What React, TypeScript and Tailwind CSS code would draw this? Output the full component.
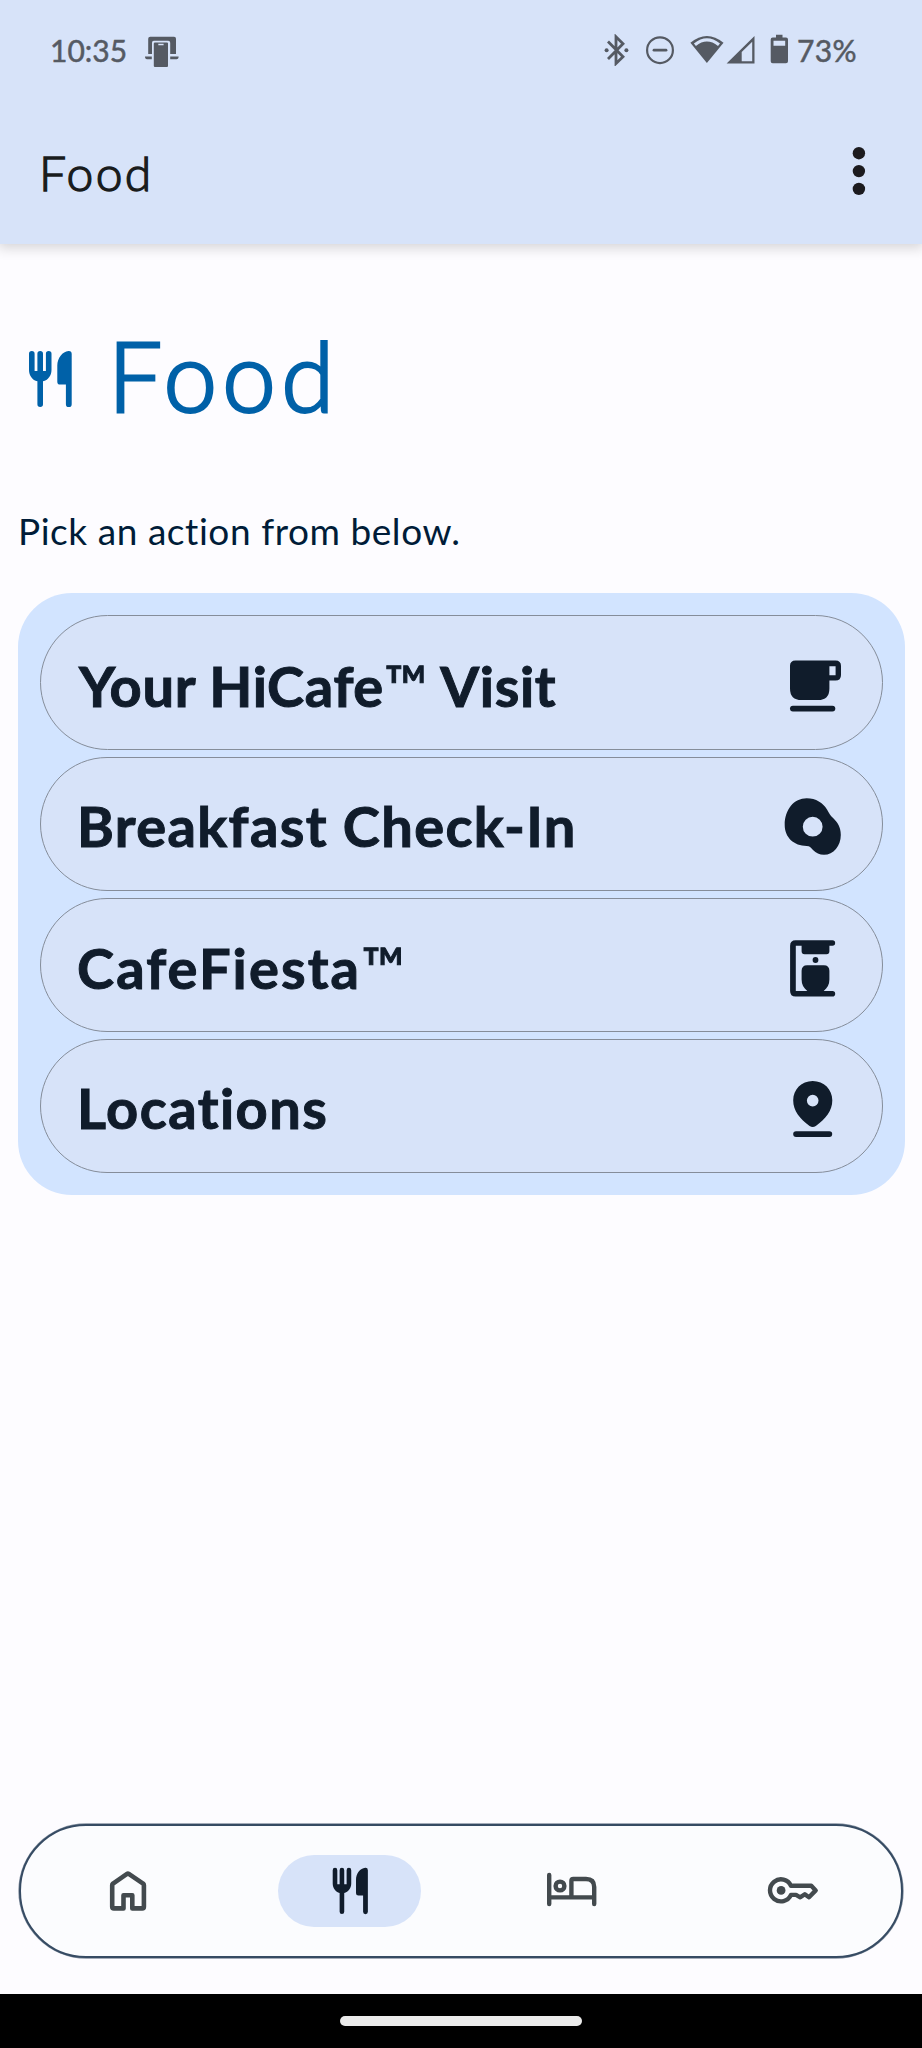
import type { ReactNode } from "react";

type IconProps = { box: string; className: string; children: ReactNode };

function Icon({ box, className, children }: IconProps) {
  return (
    <svg viewBox={box} className={`block shrink-0 ${className}`} fill="currentColor" aria-hidden="true">
      {children}
    </svg>
  );
}

function ForkKnife({ className }: { className: string }) {
  return (
    <Icon box="16 344.6 68 68" className={className}>
      <path d="M29 353.3a2.8 2.8 0 0 1 5.6 0V370.5H37.4V353.3a2.8 2.8 0 0 1 5.6 0V370.5H45.9V353.3a2.8 2.8 0 0 1 5.6 0V369.5C51.5 375 48 379.8 43 380.9V403.8a2.8 2.8 0 0 1 -5.6 0V380.9C32.5 379.8 29 375 29 369.5Z" />
      <path d="M57.3 365C57.3 357.5 62.5 351 68.5 350.5Q71.7 350.3 71.7 353.5V403.8a2.9 2.9 0 0 1 -5.8 0V384.2H60.2Q57.3 384.2 57.3 381.3Z" />
    </Icon>
  );
}

function StatusBar() {
  return (
    <div className="flex h-[101px] items-center pb-[2px] pl-[50px] pr-[65px] text-[#555a63]">
      <span className="text-[30px] leading-none [-webkit-text-stroke:0.5px_currentColor]">10:35</span>
      <Icon box="144 35.5 36 34" className="ml-[17px] mt-[4px] h-[34px] w-[36px]">
        <path d="M150.3 37.3H174Q176 37.3 176 39.3V54.5H170.2V43.3Q170.2 41.2 168.2 41.2H153.8Q152 41.2 152 43.3V54.5H148.2V39.3Q148.2 37.3 150.3 37.3Z" />
        <path fillRule="evenodd" d="M155 43H167Q168 43 168 44V66.4Q168 67.4 167 67.4H155Q153.8 67.4 153.8 66.4V44Q153.8 43 155 43ZM158.3 44.2V45.8H163.6V44.2Z" />
        <path d="M145 57H151.8V59.8H147Q145 59.8 145 57ZM170.2 57H178.6Q178.6 59.8 176.6 59.8H170.2Z" />
      </Icon>
      <div className="flex-1" />
      <Icon box="600 34.5 192 32" className="mr-[5px] h-[32px] w-[192px]">
        <path d="M608 42L623 57.2L616 64V37.3L623 44.2L608 59.4" fill="none" stroke="currentColor" strokeWidth="2.8" />
        <circle cx="606.6" cy="50.7" r="2" />
        <circle cx="626.4" cy="50.7" r="2" />
        <circle cx="660" cy="50.7" r="12.9" fill="none" stroke="currentColor" strokeWidth="2.2" />
        <path d="M654 50.7H666" stroke="currentColor" strokeWidth="2.8" strokeLinecap="round" />
        <path d="M690.4 43.3Q706.9 29.7 723.5 43.3L706.9 63.6Z" />
        <path d="M694.9 45.2Q706.9 35.6 719 45.2" fill="none" stroke="#d7e3f9" strokeWidth="3.2" />
        <path fillRule="evenodd" d="M726.6 64L754.5 36.4V64ZM741.7 61.8H752.2V42.2L741.7 52.6Z" />
        <path fillRule="evenodd" d="M776 35.3H782.5V38H786Q788 38 788 40V61.8Q788 63.8 786 63.8H772.7Q770.7 63.8 770.7 61.8V40Q770.7 38 772.7 38H776ZM773.5 41.2V46.2H785.2V41.2Z" />
      </Icon>
      <span className="text-[30px] leading-none tracking-[0.4px] [-webkit-text-stroke:0.5px_currentColor]">73%</span>
    </div>
  );
}

function CupIcon() {
  return (
    <Icon box="779 648.5 68 68" className="size-[68px]">
      <path fillRule="evenodd" d="M795.5 660H835.5Q841 660 841 665.5V674.5Q841 680 835.5 680H829.4V688Q829.4 699.6 818 699.6H801.5Q790 699.6 790 688V665.5Q790 660 795.5 660ZM829.4 665.8V674.8H835.6V665.8Z" />
      <rect x="790" y="705.2" width="45.3" height="5.8" rx="2.9" />
    </Icon>
  );
}

function EggIcon() {
  return (
    <Icon box="779 790 68 68" className="size-[68px]">
      <path
        fillRule="evenodd"
        d="M806.7 798.3C816 798.3 823 803 827 809.5C829.5 813.6 830 815.2 832.8 817.8C837.5 822.3 840.8 827 840.8 835C840.8 846 833.5 854.8 824 854.8C819.5 854.8 816 853 813 850C810.5 847.3 809.8 845.9 806.7 845.9C794 845.9 784.7 837.5 784.7 825C784.7 809.5 794 798.3 806.7 798.3ZM812.7 816.8A9.9 9.9 0 1 0 812.7 836.6A9.9 9.9 0 1 0 812.7 816.8Z"
      />
    </Icon>
  );
}

function CoffeeMakerIcon() {
  return (
    <Icon box="779 931 68 68" className="size-[68px]">
      <path d="M795.6 940.2H832.4a2.7 2.7 0 0 1 0 5.5H829.4V951.3Q829.4 954.2 826.5 954.2H804.6Q801.6 954.2 801.6 951.3V945.7H795.8V990.9H807.3C803.6 988 801.6 984.5 801.6 979.5V970.8Q801.6 965.2 807.2 965.2H823.8Q829.4 965.2 829.4 970.8V979.5C829.4 984.5 827.4 988 823.7 990.9H832.4a2.7 2.7 0 0 1 0 5.6H795.6Q790.1 996.5 790.1 991V945.7Q790.1 940.2 795.6 940.2Z" />
      <circle cx="815.5" cy="960" r="2.9" />
    </Icon>
  );
}

function PinIcon() {
  return (
    <Icon box="779 1072 68 68" className="size-[68px]">
      <path
        fillRule="evenodd"
        d="M812.7 1081C824 1081 832.3 1089.5 832.3 1100.3C832.3 1111 825.5 1119 815.8 1126Q812.7 1128 809.6 1126C800 1119 793.2 1111 793.2 1100.3C793.2 1089.5 801.5 1081 812.7 1081ZM812.7 1094.8A5.8 5.8 0 1 0 812.7 1106.4A5.8 5.8 0 1 0 812.7 1094.8Z"
      />
      <rect x="793.2" y="1131.2" width="39" height="5.7" rx="2.85" />
    </Icon>
  );
}

function Trademark() {
  return <span className="text-[58px] font-normal leading-none">™</span>;
}

const actions = [
  { id: "visit", label: <>Your HiCafe<Trademark /> Visit</>, tracking: "pl-[38px] tracking-[0.65px]", icon: <CupIcon /> },
  { id: "breakfast", label: <>Breakfast Check-In</>, tracking: "pl-[36px] tracking-[1.37px]", icon: <EggIcon /> },
  { id: "fiesta", label: <>CafeFiesta<Trademark /></>, tracking: "pl-[36px] tracking-[2.1px]", icon: <CoffeeMakerIcon /> },
  { id: "locations", label: <>Locations</>, tracking: "pl-[36px] tracking-[1.45px]", icon: <PinIcon /> },
];

function BottomNav() {
  return (
    <nav className="mb-[36px] ml-[19px] flex h-[134px] w-[884px] items-center justify-between rounded-full border-2 border-[#364b63] bg-[#fbfcfe] pl-[35.5px] pr-[36px] text-[#434a4e] shadow-[0_0_0_0.7px_rgba(54,75,99,0.6)]">
      <button className="flex h-[72px] w-[143px] items-center justify-center" aria-label="Home">
        <Icon box="100.5 1863 56 56" className="size-[56px]">
          <path d="M114.4 1908.4H124V1895.3H132.8V1908.4H142.7Q144.4 1908.4 144.4 1906.7V1885.2Q144.4 1884.3 143.6 1883.6L129.3 1873.9Q128.4 1873.3 127.5 1873.9L113.5 1883.6Q112.7 1884.3 112.7 1885.2V1906.7Q112.7 1908.4 114.4 1908.4Z" fill="none" stroke="currentColor" strokeWidth="4.6" strokeLinejoin="round" />
        </Icon>
      </button>
      <button className="flex h-[72px] w-[143px] items-center justify-center rounded-full bg-[#d7e3f9] text-[#101c2b]" aria-label="Food">
        <ForkKnife className="size-[56px]" />
      </button>
      <button className="flex h-[72px] w-[143px] items-center justify-center" aria-label="Stays">
        <Icon box="544 1863 56 56" className="size-[56px]">
          <g fill="none" stroke="currentColor" strokeWidth="4.4" strokeLinecap="round">
            <path d="M549.2 1875V1904M549.2 1897.4H594.2M594.2 1904V1887Q594.2 1879 586 1879H573.3Q571.4 1879 571.4 1881V1897" />
            <circle cx="560" cy="1886" r="4.4" />
          </g>
        </Icon>
      </button>
      <button className="flex h-[72px] w-[143px] items-center justify-center" aria-label="Digital key">
        <Icon box="765 1863 56 56" className="size-[56px]">
          <path d="M791 1885.8H811.3L815.7 1890.4L809 1897.3L804.8 1894.2L800.3 1897.3L796 1894.9H791A11 11 0 1 1 791 1885.8Z" fill="none" stroke="currentColor" strokeWidth="4.4" strokeLinejoin="round" />
          <circle cx="781.1" cy="1890.4" r="4.4" />
        </Icon>
      </button>
    </nav>
  );
}

export default function App() {
  return (
    <div className="flex h-[2048px] w-[922px] flex-col overflow-hidden bg-[#fdfcff] font-[Lato,sans-serif]">
      <header className="h-[244px] shrink-0 bg-[#d7e3f9] shadow-[0_2px_12px_2px_rgba(0,0,0,0.16)]">
        <StatusBar />
        <div className="flex h-[143px] items-center justify-between pl-[39px] pr-[55px]">
          <h1 className="text-[48px] font-light leading-none tracking-[2.4px] text-[#191c1d] [-webkit-text-stroke:1.4px_currentColor]">Food</h1>
          <Icon box="850.5 144.5 16 54" className="mb-[3px] h-[54px] w-[16px] text-[#1c1b1f]">
            <circle cx="858.4" cy="153.7" r="6.2" />
            <circle cx="858.4" cy="171.6" r="6.2" />
            <circle cx="858.4" cy="189.4" r="6.2" />
          </Icon>
        </div>
      </header>

      <main className="flex flex-1 flex-col px-[16px] pt-[67px]">
        <div className="flex h-[127px] items-center gap-[24px] text-[#0061a8]">
          <ForkKnife className="mt-[8px] size-[68px]" />
          <h2 className="text-[96px] font-light leading-none tracking-[5.3px] [-webkit-text-stroke:2.8px_currentColor]">Food</h2>
        </div>
        <p className="mt-[63px] h-[60px] pl-[2px] text-[37px] leading-[60px] tracking-[0.56px] text-[#001c38]">Pick an action from below.</p>
        <div className="ml-[2px] mt-[32px] grid h-[602px] w-[887px] content-start gap-[7px] rounded-[54px] bg-[#d2e4ff] px-[22px] pt-[22px]">
          {actions.map((a) => (
            <button
              key={a.id}
              className="flex h-[134px] w-full items-center justify-between rounded-full border border-[#858d9a] bg-[#d7e3f9] pr-[35px] text-[#101c2b] first:h-[135px]"
            >
              <span className={`whitespace-nowrap pt-[4px] text-[56px] font-bold leading-none [-webkit-text-stroke:1px_currentColor] ${a.tracking}`}>{a.label}</span>
              {a.icon}
            </button>
          ))}
        </div>
      </main>

      <BottomNav />
      <footer className="flex h-[54px] shrink-0 justify-center bg-black pt-[22px]">
        <div className="h-[10px] w-[242px] rounded-full bg-[#ebebeb]" />
      </footer>
    </div>
  );
}
